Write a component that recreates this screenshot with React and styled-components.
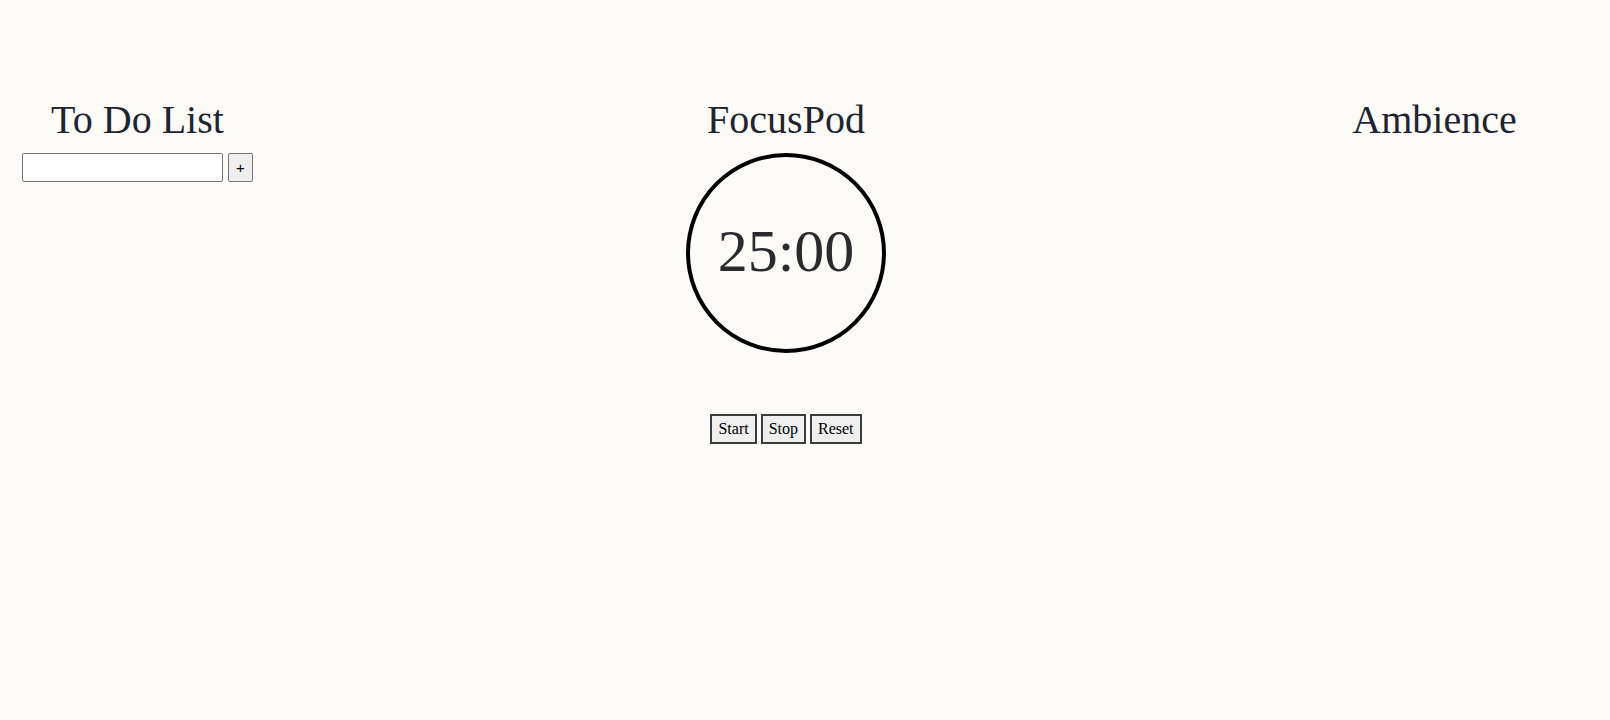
import React from "react";
import styled, { createGlobalStyle } from "styled-components";

const GlobalStyle = createGlobalStyle`
  html, body {
    margin: 0;
    padding: 0;
    background: #fcfbf7;
  }
  body {
    font-family: "Liberation Serif", "Times New Roman", serif;
    color: #212529;
  }
`;

const Page = styled.main`
  display: flex;
  align-items: flex-start;
  gap: 433px;
  padding: 96px 0 0 22px;
  min-height: 720px;
  box-sizing: border-box;
`;

const Column = styled.section`
  display: flex;
  flex-direction: column;
  align-items: center;
  width: ${(p) => p.$width || "auto"};
`;

const Heading = styled.h1`
  margin: 0 0 10px;
  font-family: "Liberation Serif", "Times New Roman", serif;
  font-size: 40px;
  font-weight: 400;
  line-height: normal;
  color: #1f2430;
  white-space: nowrap;
`;

const AddRow = styled.form`
  display: flex;
  align-items: center;
  gap: 5px;
`;

const TaskInput = styled.input`
  box-sizing: border-box;
  width: 201px;
  height: 29px;
  border: 1px solid #767676;
  border-radius: 2px;
  background: #ffffff;
  font-family: "Liberation Sans", Arial, sans-serif;
  font-size: 16px;
  padding: 1px 2px;
`;

const AddButton = styled.button`
  box-sizing: border-box;
  width: 25px;
  height: 29px;
  border: 1px solid #767676;
  border-radius: 2px;
  background: #efefef;
  color: #000;
  font-family: "Liberation Sans", Arial, sans-serif;
  font-size: 15px;
  padding: 0;
  display: flex;
  align-items: center;
  justify-content: center;
`;

const Dial = styled.div`
  box-sizing: border-box;
  width: 200px;
  height: 200px;
  border: 4px solid #000;
  border-radius: 50%;
  display: flex;
  align-items: center;
  justify-content: center;
`;

const TimeText = styled.span`
  font-family: "Liberation Serif", "Times New Roman", serif;
  font-size: 60px;
  color: #2a2b2e;
  line-height: normal;
  margin-top: -3px;
`;

const Controls = styled.div`
  display: flex;
  gap: 4px;
  margin-top: 61px;
`;

const ControlButton = styled.button`
  box-sizing: border-box;
  height: 30px;
  padding: 0 6px;
  border: 2px solid #3c3c3c;
  border-radius: 0;
  background: #efefef;
  color: #000;
  font-family: "Liberation Serif", "Times New Roman", serif;
  font-size: 16px;
  line-height: normal;
`;

export default function App() {
  return (
    <>
      <GlobalStyle />
      <Page>
        <Column>
          <Heading>To Do List</Heading>
          <AddRow onSubmit={(e) => e.preventDefault()}>
            <TaskInput type="text" />
            <AddButton type="submit">+</AddButton>
          </AddRow>
        </Column>
        <Column $width="200px">
          <Heading>FocusPod</Heading>
          <Dial>
            <TimeText>25:00</TimeText>
          </Dial>
          <Controls>
            <ControlButton>Start</ControlButton>
            <ControlButton>Stop</ControlButton>
            <ControlButton>Reset</ControlButton>
          </Controls>
        </Column>
        <Column $width="231px">
          <Heading>Ambience</Heading>
        </Column>
      </Page>
    </>
  );
}
